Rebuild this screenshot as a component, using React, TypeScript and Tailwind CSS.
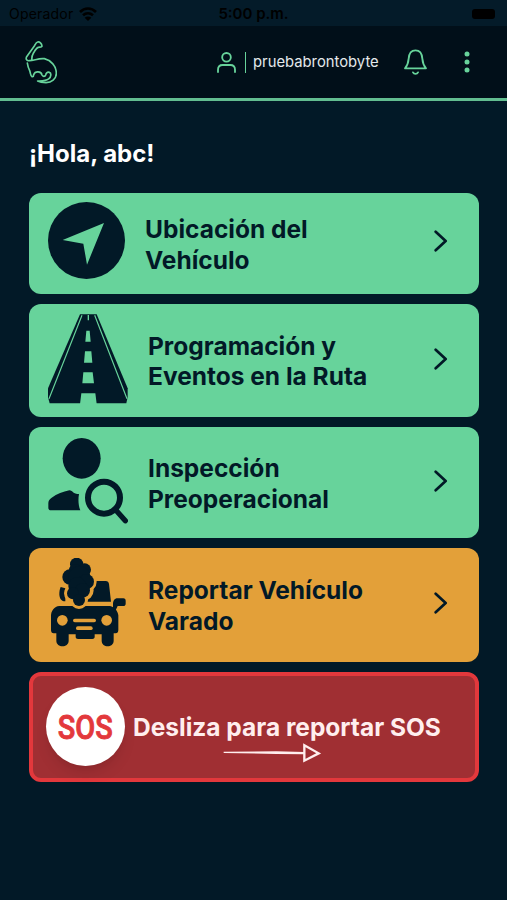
import clsx from "clsx";
import React from "react";

type TMenuItem = {
  lines: string[];
  icon: React.ReactNode;
  className: string;
  labelClassName?: string;
};

function LocationIcon() {
  return (
    <svg className="h-[77px] w-[77px]" viewBox="0 0 231 231">
      <circle cx="115.5" cy="115.5" fill="#021927" r="115.5" />
      <path className="fill-[#67d39b]" d="M168 63 44 114l62 11 11 63z" />
    </svg>
  );
}

function RoadIcon() {
  return (
    <svg className="h-[90px] w-20" fill="#021927" viewBox="0 0 240 270">
      <path d="M96 1h50l93 222v26l-4 19H5L0 250v-27z" />
      <g fill="#67d39b">
        <path d="M115 50h10l3 33h-16zM111 112h19l3 34h-25zM106 175h28l4 33h-35z" />
        <path d="M100 238h42l4 32H96z" />
      </g>
      <g fill="none" stroke="#67d39b">
        <path d="M102 4 3 254M140 4l97 250" strokeWidth="3.5" />
        <path d="M121 3v16" strokeWidth="4" />
      </g>
    </svg>
  );
}

function InspectionIcon() {
  return (
    <svg className="h-[86px] w-20" fill="#021927" viewBox="0 0 240 258">
      <ellipse cx="101" cy="61" rx="57" ry="61" />
      <path d="M64 157c5 0 9 3 13 7 4 3 10 3 16 4-3 16-2 34 4 49H9c-5 0-8-3-8-8v-13c0-8 3-12 10-17 16-11 34-18 53-22z" />
      <g fill="none" stroke="#021927">
        <circle cx="168" cy="179" r="48" strokeWidth="18" />
        <path d="m204 217 28 31" strokeLinecap="round" strokeWidth="16" />
      </g>
    </svg>
  );
}

function BrokenCarIcon() {
  return (
    <svg className="h-[90px] w-20" fill="#021927" viewBox="0 0 240 270">
      <path d="M144 69h29c6 0 9 3 10 9l6 53h-74l8-30zM38 87l14 4v39c-8 1-17-5-18-20 0-8 1-17 4-23z" />
      <path d="M34 144h152c13 2 24 15 25 28v44c0 6-3 10-8 10h-6v22c0 22-36 22-36 0v-19h-21v8c0 4-3 6-7 6H90c-4 0-7-2-7-6v-8H62v19c0 22-37 22-37 0v-22h-8c-5 0-8-4-8-10v-42c0-15 10-29 25-30z" />
      <path d="M195 155v-16c0-10 4-18 14-18h17c5 0 7 3 7 7v9c0 4-3 7-7 7h-17l-6 13z" />
      <g stroke="#e3a039" strokeWidth="18">
        <circle cx="75" cy="106" r="18" />
        <circle cx="106" cy="97" r="22" />
        <circle cx="93" cy="126" r="18" />
        <circle cx="115" cy="71" r="22" />
      </g>
      <circle cx="86" cy="19" r="20" />
      <circle cx="110" cy="35" r="19" />
      <circle cx="82" cy="38" r="20" />
      <circle cx="66" cy="57" r="23" />
      <circle cx="94" cy="58" r="33" />
      <circle cx="115" cy="71" r="23" />
      <circle cx="88" cy="84" r="27" />
      <circle cx="104" cy="97" r="22" />
      <circle cx="75" cy="106" r="18" />
      <circle cx="93" cy="126" r="18" />
      <g fill="#e3a039">
        <circle cx="43" cy="187" r="16" />
        <circle cx="176" cy="187" r="16" />
        <rect height="11" rx="5.5" width="69" x="75" y="182" />
        <rect height="11" rx="5.5" width="50" x="84" y="205" />
      </g>
    </svg>
  );
}

function DinoLogo() {
  return (
    <svg
      className="mt-px h-[44px] w-8"
      fill="none"
      stroke="#67d39b"
      strokeLinecap="round"
      strokeLinejoin="round"
      strokeWidth="5"
      viewBox="0 0 96 132"
    >
      <path d="M20 57c0-8 1-14 5-20 5-9 8-16 15-18 5-1 11 0 11-4-1-8-7-13-13-12-5 1-7 7-10 12L5 47c-4 8 1 13 8 12 14 0 27-8 45-6 20 5 36 22 36 44 0 18-15 27-31 28-9 0-18-1-25-5 12 0 25 1 34-7 6-5 8-17 1-19-7-2-10 3-11 8-2 6-9 5-11 0-2-12-21-13-25-1-1 4 0 7-5 6-5-2-4-10-7-18-4-8-6-15-7-23" />
    </svg>
  );
}

const MENU_ITEMS: TMenuItem[] = [
  {
    lines: ["Ubicación del", "Vehículo"],
    icon: <LocationIcon />,
    className: "h-[101.5px] bg-[#67d39b] pb-[5px]",
    labelClassName: "-ml-[3px] pt-[7.5px]",
  },
  {
    lines: ["Programación y", "Eventos en la Ruta"],
    icon: <RoadIcon />,
    className: "h-[113.3px] bg-[#67d39b] pb-1",
    labelClassName: "pt-[5.5px]",
  },
  {
    lines: ["Inspección", "Preoperacional"],
    icon: <InspectionIcon />,
    className: "h-[111px] bg-[#67d39b] pb-1",
    labelClassName: "pt-[5.5px]",
  },
  {
    lines: ["Reportar Vehículo", "Varado"],
    icon: <BrokenCarIcon />,
    className: "h-[113.3px] bg-[#e3a039] pb-1",
    labelClassName: "pt-[5.5px]",
  },
];

function StatusBar() {
  return (
    <div className="grid h-[26px] grid-cols-3 items-center bg-[#041b29] px-[9px] pt-0.5 text-sm text-black">
      <div className="flex items-center gap-1.5 tracking-[0.2px]">
        <span>Operador</span>
        <svg className="h-[14px] w-[18px]" viewBox="0 0 54 42">
          <g fill="none" stroke="black" strokeWidth="8">
            <path d="M3 15C17 1 37 1 51 15M12 25c9-8 21-8 30 0" />
          </g>
          <path d="m17 32c6-5 14-5 20 0L27 42z" />
        </svg>
      </div>
      <div className="text-center text-[15px] font-semibold whitespace-nowrap">
        5:00 p.m.
      </div>
      <div className="mr-[3px] h-[10px] w-[23px] justify-self-end rounded-[3px] bg-black" />
    </div>
  );
}

function Header() {
  return (
    <header className="flex h-[75px] items-center border-b-[3px] border-[#62bd90] bg-[#010f19] pr-[37px] pl-[25px]">
      <DinoLogo />
      <div className="ml-auto flex items-center">
        <svg
          className="h-[21px] w-[19px]"
          fill="none"
          stroke="#67d39b"
          strokeLinecap="round"
          strokeWidth="5.5"
          viewBox="0 0 57 63"
        >
          <circle cx="28.5" cy="16" r="13" />
          <path d="M3 60v-7c0-9 6-14 14-14h23c8 0 14 5 14 14v7" />
        </svg>
        <div className="ml-[9px] h-[21px] w-px bg-[#67d39b]" />
        <span className="ml-[7px] w-[126px] text-[14.8px] whitespace-nowrap text-[#e4e9ec]">
          pruebabrontobyte
        </span>
        <svg
          className="ml-[25px] h-[26px] w-[23px]"
          fill="none"
          stroke="#67d39b"
          strokeLinecap="round"
          strokeLinejoin="round"
          strokeWidth="5.5"
          viewBox="0 0 69 78"
        >
          <path d="M3 58h63c-7-8-10-16-11-29C54 13 46 4 34.500 4S15 13 14 29C13 42 10 50 3 58zM27 70c3 6 12 6 15 0" />
        </svg>
        <svg
          className="ml-[37px] h-[22px] w-[6px]"
          fill="#67d39b"
          viewBox="0 0 18 66"
        >
          <circle cx="9" cy="9" r="7.500" />
          <circle cx="9" cy="33" r="7.500" />
          <circle cx="9" cy="57" r="7.500" />
        </svg>
      </div>
    </header>
  );
}

function MenuCard(props: { item: TMenuItem }) {
  const { item } = props;

  return (
    <button
      className={clsx(
        "flex w-full items-center rounded-xl pr-[31px] pl-[19px] text-left text-[#021927]",
        item.className,
      )}
    >
      <span className="flex w-[100px] shrink-0">{item.icon}</span>
      <span
        className={clsx(
          "grow text-[24.5px] leading-[30.6px] font-bold whitespace-nowrap",
          item.labelClassName,
        )}
      >
        {item.lines.map((line) => (
          <span className="block" key={line}>
            {line}
          </span>
        ))}
      </span>
      <svg
        className="h-[22px] w-[14px] shrink-0"
        fill="none"
        stroke="#021927"
        strokeLinecap="round"
        strokeLinejoin="round"
        strokeWidth="8"
        viewBox="0 0 42 66"
      >
        <path d="m5 5 30 28L5 61" />
      </svg>
    </button>
  );
}

function SosSlider() {
  return (
    <div className="flex h-[110px] items-center rounded-xl border-4 border-[#e3383c] bg-[#a02f33] pl-[13px]">
      <div className="flex size-[79px] shrink-0 items-center justify-center rounded-full bg-white shadow-lg">
        <span className="scale-x-[0.85] font-[Roboto,sans-serif] text-[34px] leading-[44px] font-medium text-[#e3383c] [-webkit-text-stroke:0.9px_#e3383c]">
          SOS
        </span>
      </div>
      <div className="ml-[9px] flex flex-col pt-[21px]">
        <span className="-ml-px text-[24.5px] leading-[30px] font-bold whitespace-nowrap text-[#ffeeee]">
          Desliza para reportar SOS
        </span>
        <svg
          className="mt-px ml-[89px] h-[20px] w-[99px]"
          fill="#ffeeee"
          viewBox="0 0 297 60"
        >
          <path d="m2 26 158-1 84 2v7l-84-1-158-3z" />
          <path
            d="m244 7 43 24-43 22z"
            fill="none"
            stroke="#ffeeee"
            strokeWidth="7"
          />
        </svg>
      </div>
    </div>
  );
}

export default function App() {
  return (
    <div className="flex h-[900px] w-[507px] flex-col overflow-hidden bg-[#021927] font-[Inter,sans-serif]">
      <StatusBar />
      <Header />
      <main className="flex flex-col px-[29px] pr-7 pt-[37px]">
        <h1 className="text-2xl leading-8 font-bold text-white">
          ¡Hola, abc!
        </h1>
        <div className="mt-[22.5px] flex flex-col gap-2.5">
          {MENU_ITEMS.map((item) => (
            <MenuCard item={item} key={item.lines[0]} />
          ))}
          <SosSlider />
        </div>
      </main>
    </div>
  );
}
